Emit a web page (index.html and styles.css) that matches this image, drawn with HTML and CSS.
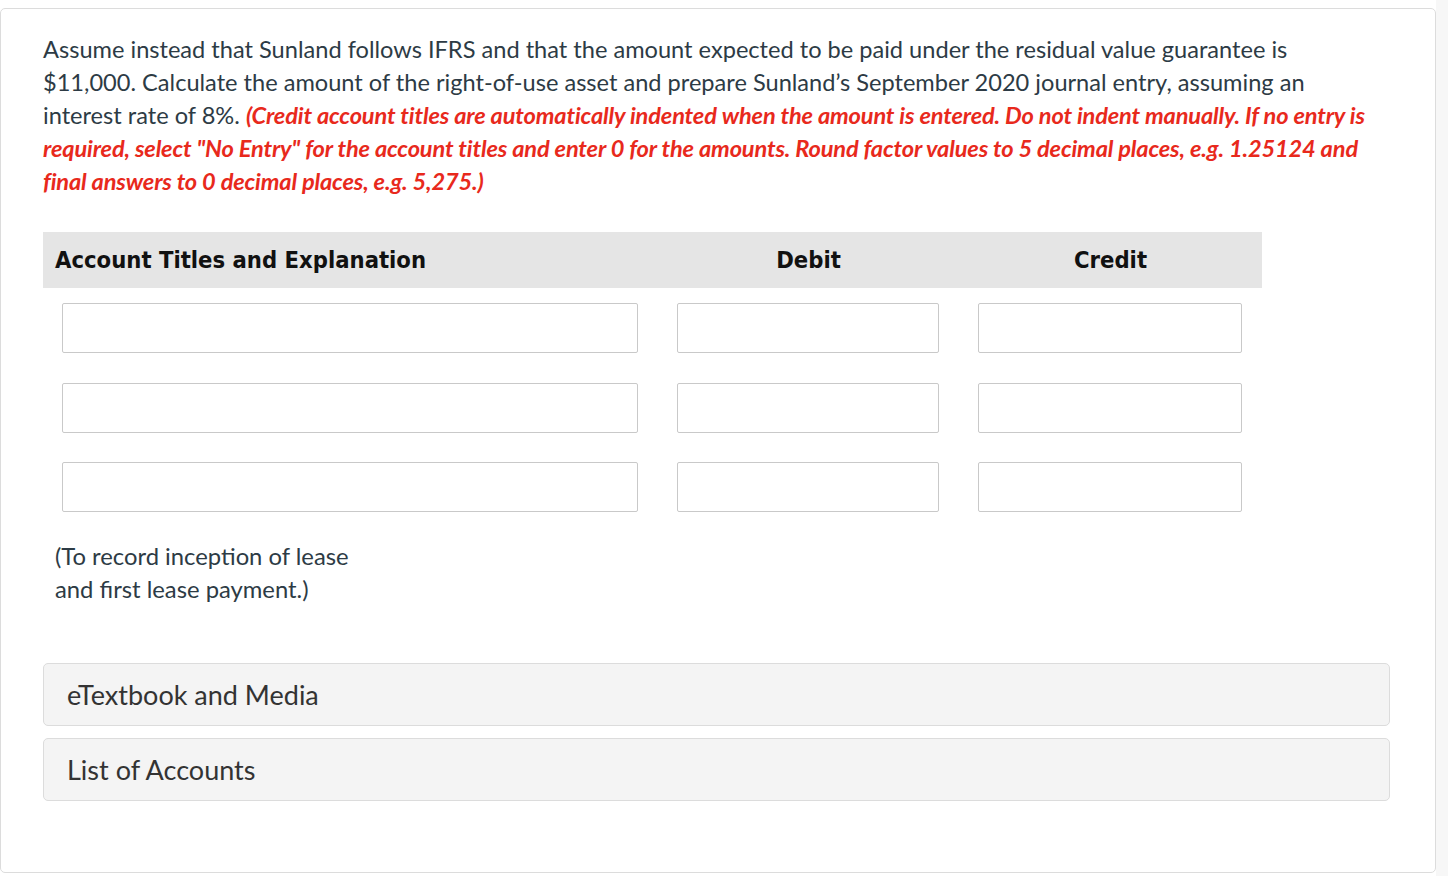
FILE: index.html
```html
<!DOCTYPE html>
<html>
<head>
<meta charset="utf-8">
<link rel="stylesheet" href="styles.css">
</head>
<body>
<div class="page">
  <div class="card">
    <p class="question">Assume instead that Sunland follows IFRS and that the amount expected to be paid under the residual value guarantee is $11,000. Calculate the amount of the right-of-use asset and prepare Sunland’s September 2020 journal entry, assuming an interest rate of 8%. <em class="note-red">(Credit account titles are automatically indented when the amount is entered. Do not indent manually. If no entry is required, select "No Entry" for the account titles and enter 0 for the amounts. Round factor values to 5 decimal places, e.g. 1.25124 and final answers to 0 decimal places, e.g. 5,275.)</em></p>

    <div class="journal">
      <div class="jhead">
        <div class="hcell hcell-acct">Account Titles and Explanation</div>
        <div class="hcell hcell-num">Debit</div>
        <div class="hcell hcell-num">Credit</div>
      </div>
      <div class="jrows">
        <div class="jrow">
          <div class="cell"><div class="field"></div></div>
          <div class="cell"><div class="field"></div></div>
          <div class="cell"><div class="field"></div></div>
        </div>
        <div class="jrow">
          <div class="cell"><div class="field"></div></div>
          <div class="cell"><div class="field"></div></div>
          <div class="cell"><div class="field"></div></div>
        </div>
        <div class="jrow">
          <div class="cell"><div class="field"></div></div>
          <div class="cell"><div class="field"></div></div>
          <div class="cell"><div class="field"></div></div>
        </div>
      </div>
      <p class="explain">(To record inception of lease<br>and first lease payment.)</p>
    </div>

    <div class="panels">
      <div class="panel">eTextbook and Media</div>
      <div class="panel">List of Accounts</div>
    </div>
  </div>
  <div class="gutter"></div>
</div>
</body>
</html>
```

FILE: styles.css
```css
html, body {
  margin: 0;
  padding: 0;
  background: #ffffff;
}
body {
  font-family: Lato, "Liberation Sans", sans-serif;
  color: #2d3b45;
}
.page {
  display: flex;
  height: 876px;
  overflow: hidden;
}
.card {
  width: 1436px;
  box-sizing: border-box;
  flex: none;
  margin-top: 8px;
  height: 865px;
  border: 1px solid #dcdcdc;
  border-radius: 5px;
  padding: 24px 44px 0 42px;
  background: #fff;
}
.gutter {
  flex: 1;
  background: #f7f7f7;
}
.question {
  margin: 0;
  font-size: 23.6px;
  line-height: 33px;
  width: 1325px;
}
.note-red {
  font-style: italic;
  font-weight: 700;
  color: #e8291c;
  letter-spacing: -0.15px;
}
.journal {
  width: 1219px;
  margin-top: 34px;
}
.jhead {
  display: grid;
  grid-template-columns: 615px 301px 303px;
  background: #e5e5e5;
  height: 56px;
  align-items: center;
  font-family: "DejaVu Sans Condensed", "DejaVu Sans", sans-serif;
  font-weight: 700;
  font-size: 23.6px;
  color: #111;
}
.hcell-acct {
  padding-left: 12px;
}
.hcell-num {
  text-align: center;
}
.jrows {
  display: flex;
  flex-direction: column;
  gap: 29.5px;
  padding-top: 15px;
}
.jrow {
  display: grid;
  grid-template-columns: 615px 301px 303px;
  height: 50px;
}
.cell {
  padding: 0 20px 0 19px;
}
.field {
  height: 50px;
  box-sizing: border-box;
  border: 1px solid #c9c9c9;
  border-radius: 2px;
  background: #fff;
}
.explain {
  margin: 28px 0 0 12px;
  font-size: 23.8px;
  line-height: 33px;
}
.panels {
  width: 1347px;
  margin-top: 57px;
  display: flex;
  flex-direction: column;
  gap: 12px;
}
.panel {
  height: 63px;
  box-sizing: border-box;
  border: 1px solid #dcdcdc;
  border-radius: 5px;
  background: #f4f4f4;
  padding-left: 23px;
  display: flex;
  align-items: center;
  font-size: 27px;
  color: #333;
}
```
